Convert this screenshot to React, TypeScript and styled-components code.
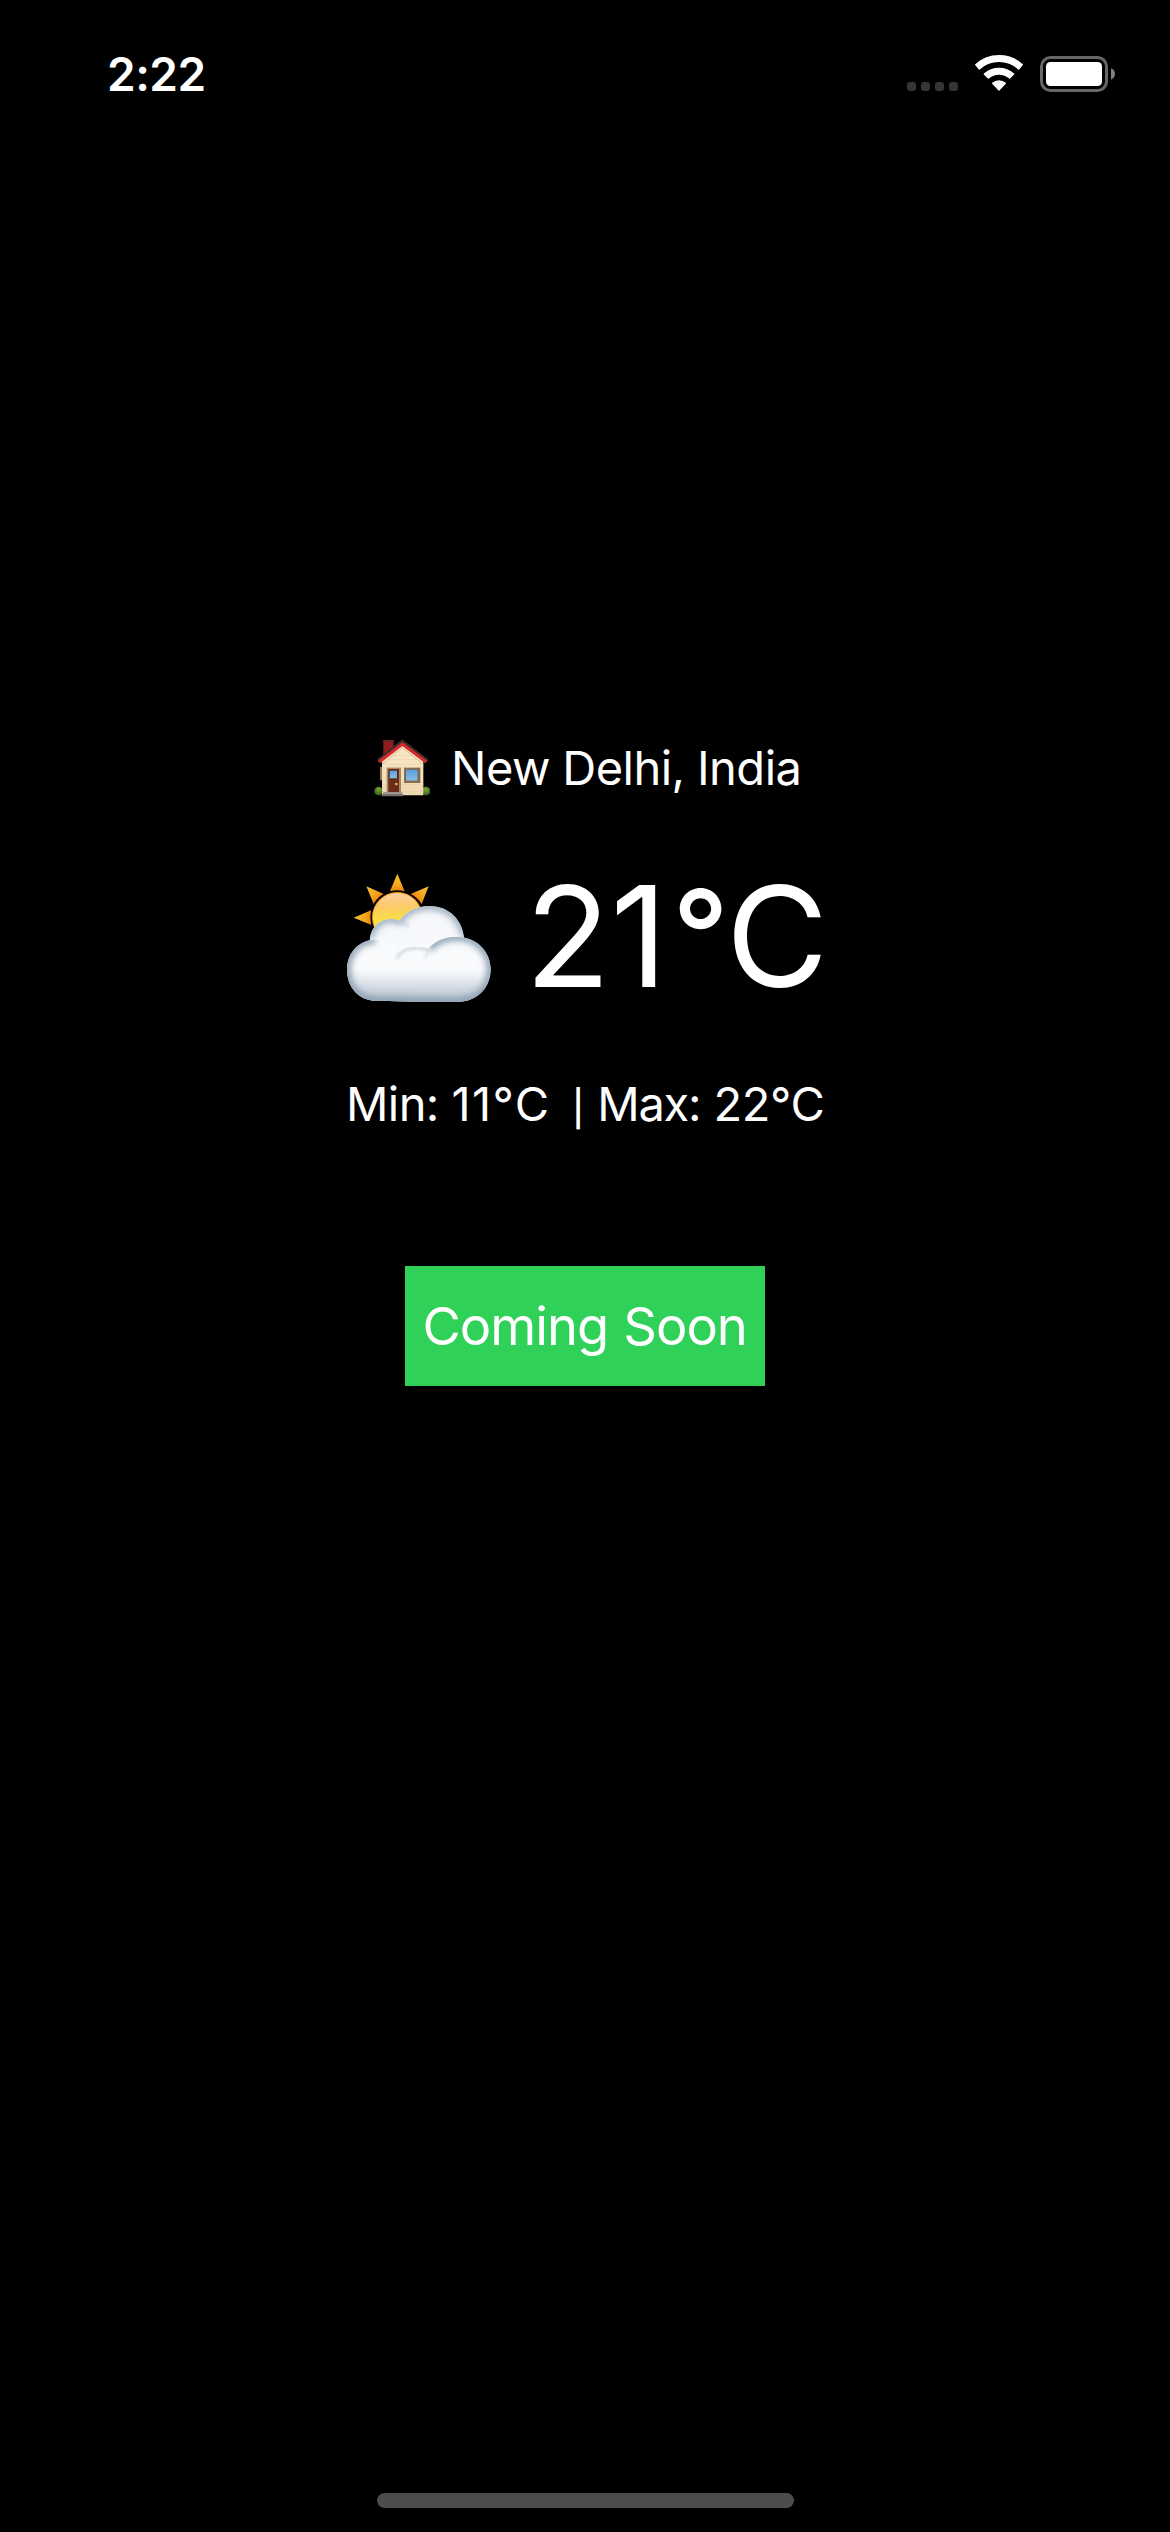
import React from 'react';
import styled, { createGlobalStyle } from 'styled-components';

const GlobalStyle = createGlobalStyle`
  *, *::before, *::after { box-sizing: border-box; }
  body {
    margin: 0;
    background: #000;
    color: #fff;
    font-family: Inter, "Liberation Sans", sans-serif;
  }
  svg { display: block; flex: none; }
`;

const Screen = styled.div`
  display: flex;
  flex-direction: column;
  width: 1170px;
  height: 2532px;
  background: #000;
  overflow: hidden;
`;

const StatusBar = styled.header`
  display: flex;
  align-items: center;
  justify-content: space-between;
  height: 148px;
  padding: 0 55px 0 107px;
`;

const Clock = styled.time`
  font-size: 46px;
  font-weight: 600;
  line-height: 60px;
  letter-spacing: -0.5px;
`;

const StatusIcons = styled.div`
  display: flex;
  align-items: center;
  gap: 17px;
`;

const Weather = styled.main`
  flex: 1;
  display: flex;
  flex-direction: column;
  align-items: flex-start;
  padding-top: 591px;
`;

const City = styled.div`
  display: flex;
  align-items: center;
  gap: 21px;
  height: 58px;
  margin-left: 374px;
`;

const CityName = styled.span`
  font-size: 47px;
  line-height: 58px;
  letter-spacing: -0.5px;
  word-spacing: -0.4px;
  white-space: nowrap;
`;

const Current = styled.div`
  display: flex;
  align-items: center;
  gap: 34px;
  height: 168px;
  margin: 55px 0 0 346px;
  & > svg { margin-top: 4px; }
`;

const Temperature = styled.span`
  font-size: 140px;
  line-height: 168px;
  white-space: nowrap;
`;

const Degree = styled.span`
  margin: 0 -3px 0 5px;
  font-size: 124px;
  font-weight: 500;
  line-height: 0;
  vertical-align: 8px;
`;

const Range = styled.div`
  height: 58px;
  margin: 55px 0 0 346px;
  font-size: 47px;
  line-height: 58px;
  white-space: pre;
`;

const RangePart = styled.span<{ $tracking: number }>`
  letter-spacing: ${({ $tracking }) => $tracking}px;
`;

const Divider = styled.span`
  margin-left: -5px;
  font-size: 35.4px;
  font-weight: 500;
  line-height: 0;
`;

const ComingSoon = styled.button`
  width: 360px;
  height: 120px;
  margin: 133px 0 0 405px;
  padding: 0 0 0 17.5px;
  border: 0;
  background: #30d158;
  color: #fff;
  font: 400 52.5px/120px Inter, "Liberation Sans", sans-serif;
  letter-spacing: -1px;
  word-spacing: 1.2px;
  text-align: left;
  white-space: nowrap;
`;

const HomeArea = styled.footer`
  display: flex;
  justify-content: center;
  height: 39px;
`;

const HomeIndicator = styled.div`
  width: 417px;
  height: 15px;
  border-radius: 8px;
  background: #4d4d4d;
`;

const SignalDots = () => (
  <svg width="51" height="36" viewBox="0 0 153 108" fill="#353535">
    {[0, 42, 84, 126].map((x) => (
      <rect key={x} x={x} y="78" width="27" height="27" rx="9" />
    ))}
  </svg>
);

const Wifi = () => (
  <svg
    width="48"
    height="36"
    viewBox="-72 -105 144 108"
    overflow="visible"
    fill="#fff"
    stroke="#fff"
    strokeWidth="4"
    strokeLinejoin="round"
  >
    <path d="M-70-79A105 105 0 0 1 70-79L59-66A88 88 0 0 0-59-66Z" />
    <path d="M-44-51A67 67 0 0 1 44-51L32-39A49 49 0 0 0-32-39Z" />
    <path d="M-19-23A29 29 0 0 1 19-23L0-3Z" />
  </svg>
);

const Battery = () => (
  <svg width="75" height="36" viewBox="0 0 225 108">
    <rect x="4.5" y="4.5" width="195" height="99" rx="27" fill="none" stroke="#666" strokeWidth="9" />
    <rect x="18" y="18" width="168" height="72" rx="13" fill="#fff" />
    <path d="M213 37C221 41 225 46 225 54S221 67 213 71Z" fill="#808080" />
  </svg>
);

const House = () => (
  <svg width="56" height="58" viewBox="42 28 168 174">
    <defs>
      <linearGradient id="wall" x2="0" y2="1">
        <stop offset="0" stopColor="#fbe9c8" />
        <stop offset="1" stopColor="#eed8b0" />
      </linearGradient>
      <linearGradient id="glass" x2="0" y2="1">
        <stop offset="0" stopColor="#5a9dda" />
        <stop offset="1" stopColor="#86bfe9" />
      </linearGradient>
      <radialGradient id="bush" cx=".5" cy=".35">
        <stop offset="0" stopColor="#7fa83c" />
        <stop offset="1" stopColor="#43691f" />
      </radialGradient>
    </defs>
    <circle cx="56" cy="184" r="13" fill="url(#bush)" />
    <circle cx="198" cy="184" r="13" fill="url(#bush)" />
    <path d="M70 34H101V62L70 84Z" fill="#8f1f1c" />
    <path d="M69 31H102V37H69Z" fill="#6e2320" />
    <path d="M60 112H66V152H60Z" fill="#8d7654" />
    <path d="M66 92L127 44L190 92V197H66Z" fill="url(#wall)" />
    <path d="M70 104H186M66 114H190M66 165H190M66 175H190M66 185H190M84 90H170M98 78H155" stroke="#e3cda4" strokeWidth="1.5" />
    <path d="M66 104L127 54L190 104" fill="none" stroke="#d3bd96" strokeWidth="3" />
    <path d="M53 92L127 33L203 92" fill="none" stroke="#33302f" strokeWidth="7" />
    <path d="M57 97L127 43L199 97" fill="none" stroke="#d5292c" strokeWidth="10" />
    <path d="M80 114H123V189H80Z" fill="#a58763" />
    <path d="M85 118H117V187H85Z" fill="#6a2b1b" />
    <path d="M87 122H113V147H87Z" fill="#3f241b" />
    <path d="M89 123H111V146H89Z" fill="url(#glass)" />
    <circle cx="109" cy="163" r="4" fill="#efb34a" />
    <path d="M132 114H181V160H132Z" fill="#8b6c50" />
    <path d="M137 119H175V154H137Z" fill="#685442" />
    <path d="M138 120H173V153H138Z" fill="url(#glass)" />
    <path d="M71 188H126L130 200H64Z" fill="#77706c" />
    <path d="M71 188H126V193H69Z" fill="#a59c94" />
  </svg>
);

const backCloud =
  'M102 262C96 208 127 178 165 178C174 178 182 180 190 183C210 155 243 139 281 139C339 139 383 183 384 240L350 330H130Z';
const frontCloud =
  'M33 330C33 278 70 240 118 240C150 240 170 250 188 272C208 260 245 256 276 268C296 243 328 231 362 231C420 231 464 274 464 329C464 382 426 423 374 426C290 430 180 423 116 423C66 420 33 381 33 330Z';

const PartlyCloudy = () => (
  <svg width="145" height="130" viewBox="30 40 435 390">
    <defs>
      <linearGradient id="sun" x2="0" y2="1">
        <stop offset="0" stopColor="#fbd0a0" />
        <stop offset=".28" stopColor="#fbcb68" />
        <stop offset=".6" stopColor="#fce03e" />
      </linearGradient>
      <radialGradient id="rays" gradientUnits="userSpaceOnUse" cx="184" cy="172" r="130">
        <stop offset=".58" stopColor="#f07d0c" />
        <stop offset=".75" stopColor="#f4a81c" />
        <stop offset="1" stopColor="#f3c332" />
      </radialGradient>
      <linearGradient id="base" x2="0" y2="1">
        <stop offset=".5" stopColor="#b4c2cf" stopOpacity="0" />
        <stop offset="1" stopColor="#a3b4c3" stopOpacity=".9" />
      </linearGradient>
      <clipPath id="backClip">
        <path d={backCloud} />
      </clipPath>
      <clipPath id="frontClip">
        <path d={frontCloud} />
      </clipPath>
      <filter id="soft" filterUnits="userSpaceOnUse" x="0" y="0" width="500" height="460">
        <feGaussianBlur stdDeviation="10" />
      </filter>
      <filter id="crease" filterUnits="userSpaceOnUse" x="0" y="0" width="500" height="460">
        <feGaussianBlur stdDeviation="4" />
      </filter>
    </defs>
    <path
      d="M184 42L206 95Q184 89 162 95ZM91 80L143 103Q124 113 113 133ZM278 80L224 103Q244 113 257 133ZM53 174L105 152Q101 174 105 195Z"
      fill="url(#rays)"
    />
    <circle cx="184" cy="173" r="76" fill="#f09a1d" />
    <circle cx="184" cy="173" r="73" fill="url(#sun)" />
    <path d={backCloud} fill="#f6f8fb" />
    <g clipPath="url(#backClip)" fill="none">
      <path d={backCloud} stroke="#9fb0c0" strokeWidth="24" filter="url(#soft)" />
      <path d="M190 183C203 187 211 193 217 201" stroke="#bcc8d3" strokeWidth="6" filter="url(#crease)" />
      <path d={frontCloud} stroke="#f8fafc" strokeWidth="12" filter="url(#soft)" />
    </g>
    <path d={frontCloud} fill="#f9fafc" />
    <path d={frontCloud} fill="url(#base)" />
    <path d="M110 243C150 238 175 258 200 262L225 290H120Z" fill="#f8fafc" filter="url(#soft)" clipPath="url(#frontClip)" />
    <g clipPath="url(#frontClip)" fill="none">
      <path
        d="M118 240C70 240 33 278 33 330C33 381 66 420 116 423C180 423 290 430 374 426C426 423 464 382 464 329C464 274 420 231 362 231C328 231 296 243 276 268"
        stroke="#8fa2b4"
        strokeWidth="24"
        filter="url(#soft)"
      />
      <path d="M182 298C192 276 212 265 240 265C256 265 268 267 277 271" stroke="#c3cdd7" strokeWidth="6" filter="url(#crease)" />
      <path d="M268 302C268 290 274 277 286 264" stroke="#dbe2e9" strokeWidth="6" filter="url(#crease)" />
    </g>
  </svg>
);

export default function App() {
  return (
    <>
      <GlobalStyle />
      <Screen>
        <StatusBar>
          <Clock>2:22</Clock>
          <StatusIcons>
            <SignalDots />
            <Wifi />
            <Battery />
          </StatusIcons>
        </StatusBar>
        <Weather>
          <City>
            <House />
            <CityName>New Delhi, India</CityName>
          </City>
          <Current>
            <PartlyCloudy />
            <Temperature>
              21<Degree>°</Degree>C
            </Temperature>
          </Current>
          <Range>
            <RangePart $tracking={-0.6}>Min: </RangePart>
            <RangePart $tracking={1.4}>11°C</RangePart>
            {'  '}
            <Divider>|</Divider>{' '}
            <RangePart $tracking={-1.3}>Max:</RangePart>{' '}
            <RangePart $tracking={-0.4}>22°C</RangePart>
          </Range>
          <ComingSoon>Coming Soon</ComingSoon>
        </Weather>
        <HomeArea>
          <HomeIndicator />
        </HomeArea>
      </Screen>
    </>
  );
}
